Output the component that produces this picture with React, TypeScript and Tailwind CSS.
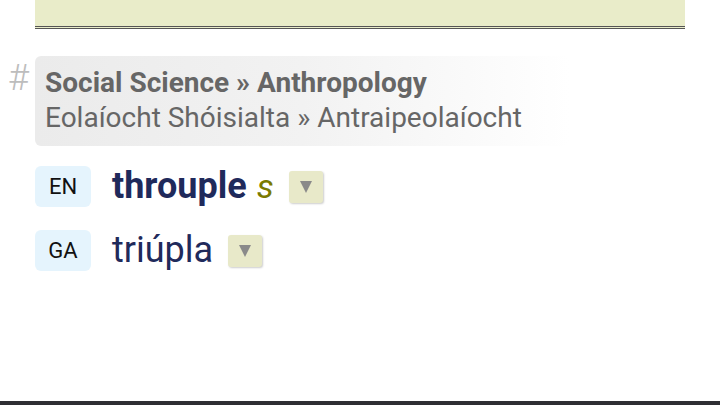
import React from "react";

function Toggle() {
  return (
    <button className="flex items-center justify-center w-[34px] h-[32px] rounded-[3px] bg-[#e8e9c9] shadow-[1px_1px_2px_rgba(0,0,0,0.2)]">
      <svg width="12" height="12" viewBox="0 0 12 12">
        <path d="M0 0 H12 L6 12 Z" fill="#8a8a8a" />
      </svg>
    </button>
  );
}

function Lang({ code }: { code: string }) {
  return (
    <span className="flex items-center justify-center w-[56px] h-[41px] rounded-[6px] bg-[#e5f4fd] text-[22px] text-[#111]">
      {code}
    </span>
  );
}

export default function App() {
  return (
    <div className="w-[720px] h-[405px] bg-white flex flex-col font-['Roboto',sans-serif] overflow-hidden">
      {/* header strip */}
      <div className="mx-[35px] w-[650px] h-[29px] bg-[#e9ecc9] border-b-[3px] border-double border-[#555]" />

      <div className="flex-1 flex flex-col">
        {/* domain */}
        <div className="flex mt-[27px]">
          <span className="w-[35px] pl-[8px] pt-[2px] text-[36px] leading-[40px] text-[#bdbdbd] font-light">#</span>
          <div className="w-[535px] h-[90px] rounded-[6px] bg-gradient-to-r from-[#ebebeb] via-[#f2f2f2] to-white px-[10px] pt-[9px] text-[#666] text-[28px] leading-[35px]">
            <div className="font-bold">Social Science » Anthropology</div>
            <div>Eolaíocht Shóisialta » Antraipeolaíocht</div>
          </div>
        </div>

        {/* terms */}
        <div className="flex items-center mt-[20px] ml-[35px] gap-[21px]">
          <Lang code="EN" />
          <div className="flex items-center gap-[10px] leading-[41px]">
            <span className="text-[36px] font-bold text-[#1f2a5b]">throuple</span>
            <span className="text-[34px] italic text-[#7a7a00] mr-[5px]">s</span>
            <Toggle />
          </div>
        </div>
        <div className="flex items-center mt-[23px] ml-[35px] gap-[21px]">
          <Lang code="GA" />
          <div className="flex items-center gap-[15px] leading-[41px]">
            <span className="text-[36px] text-[#1f2a5b]">triúpla</span>
            <Toggle />
          </div>
        </div>
      </div>

      <div className="h-[4px] bg-[#2e2e33]" />
    </div>
  );
}
